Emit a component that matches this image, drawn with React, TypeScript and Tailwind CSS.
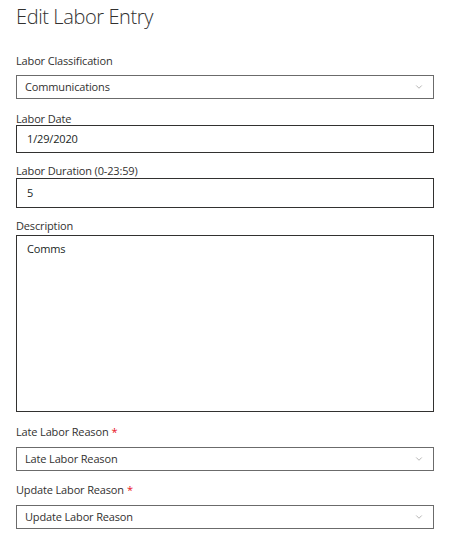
import { ChevronDown } from "lucide-react";

const font = "font-['Segoe_UI','Open_Sans','Noto_Sans',sans-serif]";

function Label({ text, required }: { text: string; required?: boolean }) {
  return (
    <div className="h-[13px] text-[11px] leading-[13px] tracking-[-0.15px] text-[#323130]">
      {text}
      {required && <span className="ml-[3px] text-[#e81123]">*</span>}
    </div>
  );
}

function Select({ value }: { value: string }) {
  return (
    <div className="flex h-[24px] items-center justify-between border border-[#6b6b6b] pl-[8px] pr-[9px] text-[11px] tracking-[-0.15px] text-[#323130]">
      <span>{value}</span>
      <ChevronDown className="h-[10px] w-[10px] text-[#8a8886]" strokeWidth={1.5} />
    </div>
  );
}

function Input({ value, h }: { value: string; h: string }) {
  return (
    <div className={`flex items-center border border-[#323130] pl-[10px] text-[11px] tracking-[-0.15px] text-[#201f1e] ${h}`}>
      {value}
    </div>
  );
}

export default function App() {
  return (
    <div className={`h-[542px] w-[449px] bg-white pl-[16px] pr-[15px] ${font}`}>
      <h1 className="h-[32px] pt-[3px] text-[20px] font-light leading-[28px] tracking-[-0.4px] text-[#323130]">
        Edit Labor Entry
      </h1>
      <div className="mt-[22px] flex flex-col">
        <Label text="Labor Classification" />
        <div className="mt-[8px]">
          <Select value="Communications" />
        </div>
        <div className="mt-[13px]">
          <Label text="Labor Date" />
        </div>
        <Input value="1/29/2020" h="h-[28px]" />
        <div className="mt-[11px]">
          <Label text="Labor Duration (0-23:59)" />
        </div>
        <div className="mt-[1px]">
          <Input value="5" h="h-[30px]" />
        </div>
        <div className="mt-[11px]">
          <Label text="Description" />
        </div>
        <div className="mt-[3px] h-[177px] border border-[#323130] pl-[10px] pt-[5px] text-[11px] tracking-[-0.15px] text-[#201f1e]">
          Comms
        </div>
        <div className="mt-[13px]">
          <Label text="Late Labor Reason" required />
        </div>
        <div className="mt-[9px]">
          <Select value="Late Labor Reason" />
        </div>
        <div className="mt-[12px]">
          <Label text="Update Labor Reason" required />
        </div>
        <div className="mt-[9px]">
          <Select value="Update Labor Reason" />
        </div>
      </div>
    </div>
  );
}
